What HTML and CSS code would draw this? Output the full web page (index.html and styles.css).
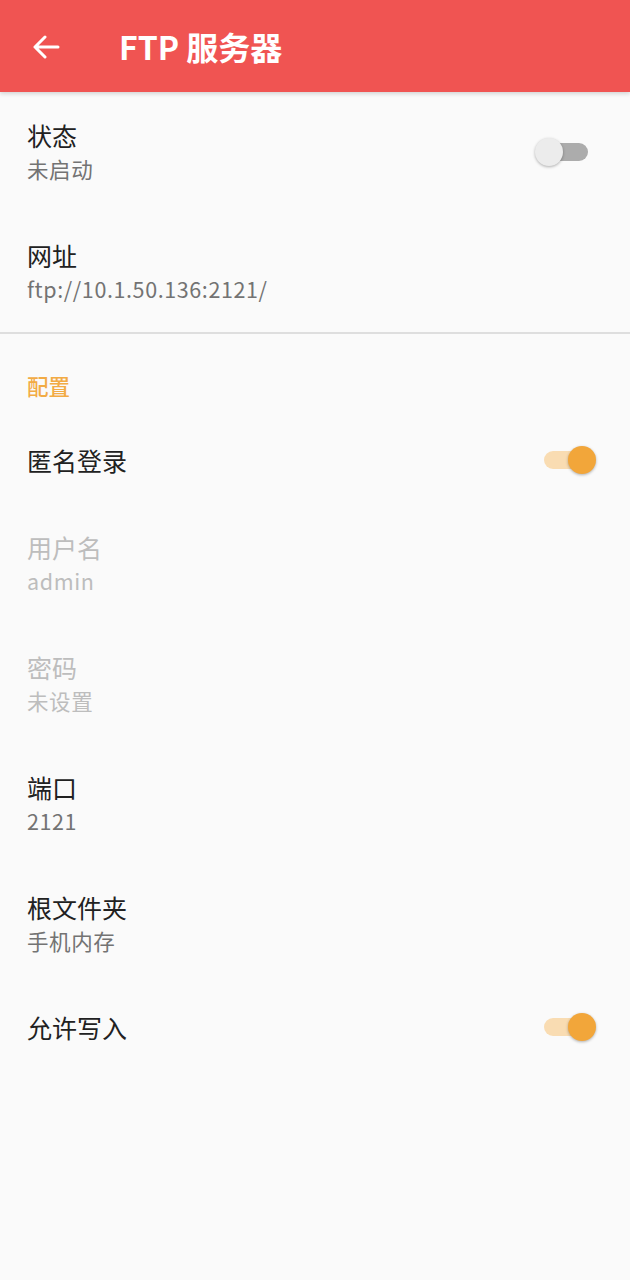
FILE: index.html
```html
<!DOCTYPE html>
<html lang="zh-CN">
<head>
  <meta charset="UTF-8" />
  <meta name="viewport" content="width=device-width, initial-scale=1" />
  <title>FTP 服务器</title>
  <link rel="stylesheet" href="styles.css">
</head>
<body>
  <header class="app-bar">
    <svg class="back" width="28" height="24" viewBox="0 0 28 24">
      <path d="M26 12H3M13 2L3 12l10 10" fill="none" stroke="#fff" stroke-width="3" stroke-linecap="round" stroke-linejoin="round"/>
    </svg>
    <h1>FTP 服务器</h1>
  </header>

  <main class="prefs">
    <div class="pref">
      <div class="pref-text">
        <div class="pref-title">状态</div>
        <div class="pref-summary">未启动</div>
      </div>
      <div class="switch"><span class="track"></span><span class="thumb"></span></div>
    </div>
    <div class="pref">
      <div class="pref-text">
        <div class="pref-title">网址</div>
        <div class="pref-summary">ftp://10.1.50.136:2121/</div>
      </div>
    </div>

    <div class="divider"></div>
    <div class="category">配置</div>

    <div class="pref">
      <div class="pref-text">
        <div class="pref-title">匿名登录</div>
      </div>
      <div class="switch on"><span class="track"></span><span class="thumb"></span></div>
    </div>
    <div class="pref disabled">
      <div class="pref-text">
        <div class="pref-title">用户名</div>
        <div class="pref-summary">admin</div>
      </div>
    </div>
    <div class="pref disabled">
      <div class="pref-text">
        <div class="pref-title">密码</div>
        <div class="pref-summary">未设置</div>
      </div>
    </div>
    <div class="pref">
      <div class="pref-text">
        <div class="pref-title">端口</div>
        <div class="pref-summary">2121</div>
      </div>
    </div>
    <div class="pref">
      <div class="pref-text">
        <div class="pref-title">根文件夹</div>
        <div class="pref-summary">手机内存</div>
      </div>
    </div>
    <div class="pref">
      <div class="pref-text">
        <div class="pref-title">允许写入</div>
      </div>
      <div class="switch on"><span class="track"></span><span class="thumb"></span></div>
    </div>
  </main>
</body>
</html>
```

FILE: styles.css
```css
body {
  margin: 0;
  font-family: "Noto Sans CJK SC", Roboto, sans-serif;
  background: #fafafa;
  height: 1280px;
}

.app-bar {
  height: 92px;
  background: #f05452;
  display: flex;
  align-items: center;
  padding-left: 32px;
  box-shadow: 0 2px 4px rgba(0, 0, 0, 0.15);
}

.back { margin-top: 1px; }

.app-bar h1 {
  margin: 0 0 0 59px;
  color: #fff;
  font-size: 32px;
  line-height: 40px;
  font-weight: 700;
}

.pref {
  display: flex;
  align-items: center;
  padding: 28px 32px 29px 27px;
}

.pref-text { flex: 1; }

.pref-title {
  font-size: 25px;
  line-height: 30px;
  color: #212121;
}

.pref-summary {
  font-size: 21.5px;
  line-height: 28px;
  margin-top: 5px;
  letter-spacing: 0.6px;
  color: #737373;
}

.pref.disabled .pref-title,
.pref.disabled .pref-summary { color: #bdbdbd; }

.divider {
  height: 2px;
  background: #dedede;
}

.category {
  padding: 38px 27px 17px;
  font-size: 21.5px;
  line-height: 28px;
  font-weight: 500;
  color: #f2ab45;
}

.switch {
  position: relative;
  width: 64px;
  height: 30px;
}

.track {
  position: absolute;
  left: 10px;
  top: 6px;
  width: 44px;
  height: 18px;
  border-radius: 9px;
  background: #acacac;
}

.thumb {
  position: absolute;
  left: 1px;
  top: 1px;
  width: 28px;
  height: 28px;
  border-radius: 50%;
  background: #ececec;
  box-shadow: 0 1px 3px rgba(0, 0, 0, 0.3);
}

.switch.on .track { background: #f9dcb2; }

.switch.on .thumb {
  left: 34px;
  background: #f2a63a;
}
```
